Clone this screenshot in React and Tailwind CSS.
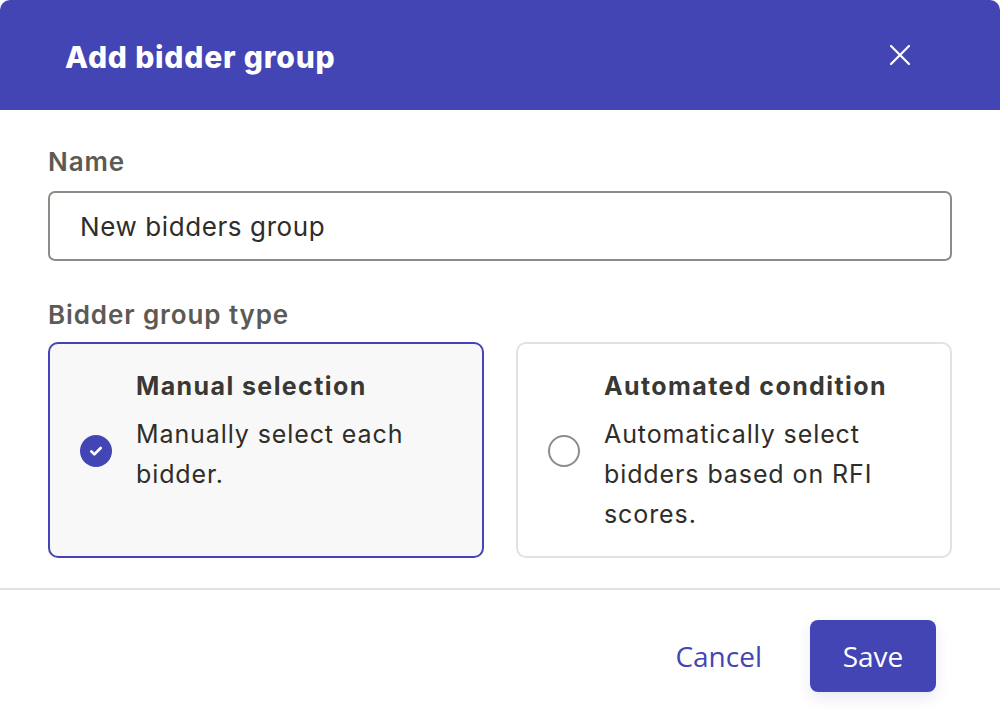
/**
 * Add bidder group modal
 */

function RadioDot({ checked }) {
  if (checked) {
    return (
      <div className="w-8 h-8 shrink-0 rounded-full bg-[#4345b4] flex items-center justify-center">
        <svg className="w-4 h-4 text-white" viewBox="0 0 24 24" fill="none" stroke="currentColor" strokeWidth={4} strokeLinecap="round" strokeLinejoin="round">
          <path d="M5 12.5l4.5 4.5L19 7.5" />
        </svg>
      </div>
    );
  }
  return <div className="w-8 h-8 shrink-0 rounded-full border-2 border-[#8f8c87] bg-white" />;
}

function TypeCard({ title, description, checked }) {
  return (
    <div
      className={
        checked
          ? "flex gap-6 rounded-[10px] border-2 border-[#4345b4] bg-[#f8f8f8] pl-[30px] pr-6 pt-6 pb-[22px]"
          : "flex gap-6 rounded-[10px] border-2 border-[#e2e2e2] bg-white pl-[30px] pr-6 pt-6 pb-[22px]"
      }
    >
      <div className="self-center">
        <RadioDot checked={checked} />
      </div>
      <div className="flex flex-col gap-[10px]">
        <div className="text-[25px] leading-[36px] font-bold tracking-[1.4px] text-[#3a3834]">{title}</div>
        <div className="text-[25px] leading-[40px] tracking-[0.9px] text-[#2f2d2a]">{description}</div>
      </div>
    </div>
  );
}

export default function App() {
  return (
    <div className="w-[1000px] h-[724px] bg-white font-['Inter',sans-serif] overflow-hidden">
      {/* Header */}
      <div className="h-[110px] bg-[#4345b4] rounded-t-[10px] flex items-center justify-between pl-[65px] pr-[88px]">
        <h1 className="text-[30px] leading-[40px] font-extrabold tracking-[0.8px] text-white mt-[4px]">Add bidder group</h1>
        <svg className="w-6 h-6 text-white" viewBox="0 0 24 24" fill="none" stroke="currentColor" strokeWidth={2.2} strokeLinecap="round">
          <path d="M3 3l18 18M21 3L3 21" />
        </svg>
      </div>

      {/* Body */}
      <div className="px-12 pt-[37px] pb-[30px]">
        <label className="block text-[26px] leading-[30px] font-semibold tracking-[0.9px] text-[#5c5a55]">Name</label>
        <div className="mt-[14px] h-[70px] rounded-[7px] border-2 border-[#8f8c87] flex items-center px-[30px]">
          <span className="text-[26px] tracking-[0.6px] text-[#2f2d2a]">New bidders group</span>
        </div>

        <label className="block mt-[39px] text-[26px] leading-[30px] font-semibold tracking-[0.9px] text-[#5c5a55]">Bidder group type</label>
        <div className="mt-[12px] grid grid-cols-2 gap-8">
          <TypeCard title="Manual selection" description={<>Manually select each<br />bidder.</>} checked />
          <TypeCard title="Automated condition" description={<>Automatically select<br />bidders based on RFI<br />scores.</>} />
        </div>
      </div>

      {/* Footer */}
      <div className="border-t-2 border-[#e2e2e2] flex items-center justify-end gap-[48px] pt-[30px] pr-[64px] font-['Open_Sans',sans-serif]">
        <button className="text-[28px] text-[#4345b4]">Cancel</button>
        <button className="w-[126px] h-[72px] rounded-[8px] bg-[#4345b4] text-white text-[28px] shadow-[0_6px_14px_rgba(67,69,180,0.12)]">Save</button>
      </div>
    </div>
  );
}
